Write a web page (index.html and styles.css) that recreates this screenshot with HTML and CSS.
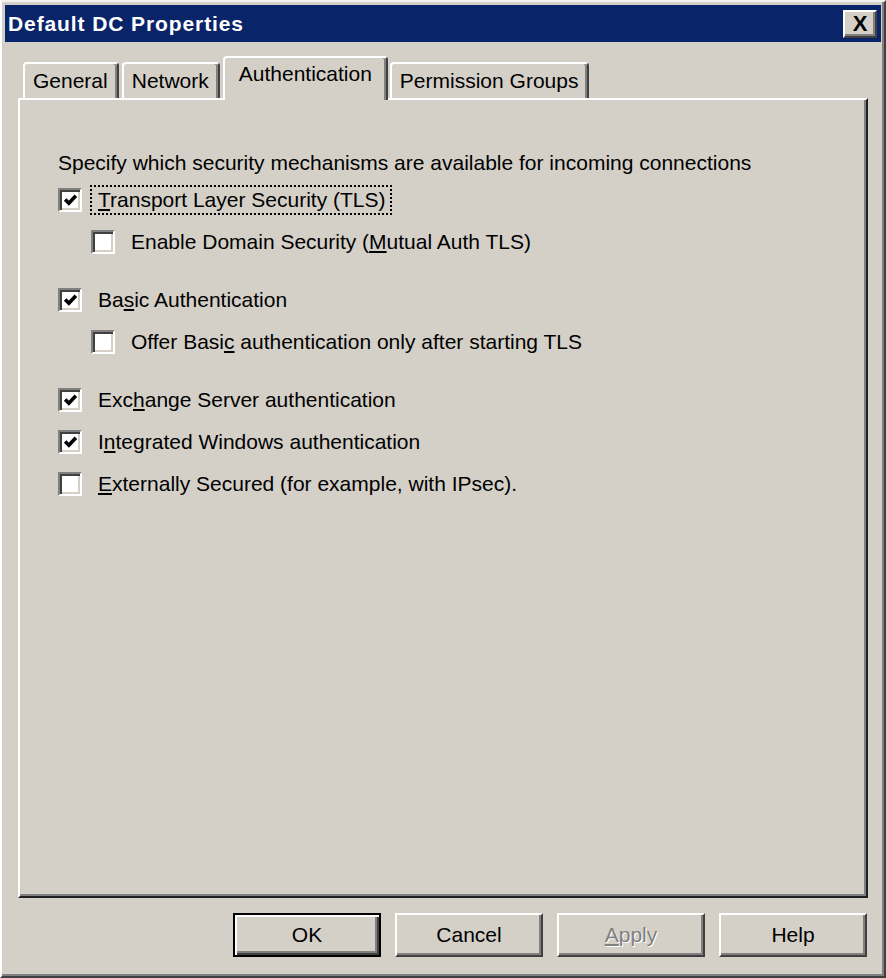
FILE: index.html
```html
<!DOCTYPE html>
<html lang="en">
<head>
  <meta charset="UTF-8">
  <title>Default DC Properties</title>
  <link rel="stylesheet" href="styles.css">
</head>
<body>
  <div class="window">
    <div class="titlebar">
      <span class="title">Default DC Properties</span>
      <span class="close">X</span>
    </div>

    <div class="content">
      <div class="tabs">
        <div class="tab">General</div>
        <div class="tab">Network</div>
        <div class="tab active">Authentication</div>
        <div class="tab">Permission Groups</div>
      </div>

      <div class="panel">
        <p class="intro">Specify which security mechanisms are available for incoming connections</p>

        <div class="group">
          <div class="row">
            <span class="box checked"><svg viewBox="0 0 14 14"><polyline points="2,6.5 5.5,10 12,3"/></svg></span>
            <span class="label focus"><u>T</u>ransport Layer Security (TLS)</span>
          </div>
          <div class="row sub">
            <span class="box"></span>
            <span class="label">Enable Domain Security (<u>M</u>utual Auth TLS)</span>
          </div>
        </div>

        <div class="group">
          <div class="row">
            <span class="box checked"><svg viewBox="0 0 14 14"><polyline points="2,6.5 5.5,10 12,3"/></svg></span>
            <span class="label">Ba<u>s</u>ic Authentication</span>
          </div>
          <div class="row sub">
            <span class="box"></span>
            <span class="label">Offer Basi<u>c</u> authentication only after starting TLS</span>
          </div>
        </div>

        <div class="group">
          <div class="row">
            <span class="box checked"><svg viewBox="0 0 14 14"><polyline points="2,6.5 5.5,10 12,3"/></svg></span>
            <span class="label">Exc<u>h</u>ange Server authentication</span>
          </div>
          <div class="row">
            <span class="box checked"><svg viewBox="0 0 14 14"><polyline points="2,6.5 5.5,10 12,3"/></svg></span>
            <span class="label">I<u>n</u>tegrated Windows authentication</span>
          </div>
          <div class="row">
            <span class="box"></span>
            <span class="label"><u>E</u>xternally Secured (for example, with IPsec).</span>
          </div>
        </div>
      </div>

      <div class="buttons">
        <div class="btn default">OK</div>
        <div class="btn">Cancel</div>
        <div class="btn disabled"><u>A</u>pply</div>
        <div class="btn">Help</div>
      </div>
    </div>
  </div>
</body>
</html>
```

FILE: styles.css
```css
body {
  margin: 0;
  background: #d4d0c8;
  font-family: "Liberation Sans", Arial, sans-serif;
  font-size: 21px;
  color: #000;
}

.window {
  width: 886px;
  height: 978px;
  box-sizing: border-box;
  padding: 3px;
  border-top: 2px solid #f4f2ee;
  border-left: 2px solid #fff;
  border-right: 2px solid #404040;
  border-bottom: 2px solid #404040;
  box-shadow: inset -2px -2px #808080;
}

/* Barra de título */
.titlebar {
  height: 37px;
  background: #0a246a;
  display: flex;
  align-items: center;
  justify-content: space-between;
  padding: 0 4px 0 3px;
}

.title {
  color: #fff;
  font-weight: bold;
  font-size: 21px;
  letter-spacing: 0.9px;
}

.close {
  width: 34px;
  height: 28px;
  box-sizing: border-box;
  background: #d4d0c8;
  border: 2px solid;
  border-color: #fff #404040 #404040 #fff;
  box-shadow: inset -2px -2px #808080;
  display: flex;
  align-items: center;
  justify-content: center;
  font-size: 22px;
  font-weight: bold;
  line-height: 1;
}

.content {
  padding: 14px 13px 0 13px;
}

/* Pestañas */
.tabs {
  display: flex;
  align-items: flex-end;
  height: 42px;
  padding-left: 5px;
  position: relative;
  z-index: 1;
}

.tab {
  height: 36px;
  box-sizing: border-box;
  padding: 5px 9px 0 8px;
  margin-right: 3px;
  border-top: 2px solid #fff;
  border-left: 2px solid #fff;
  border-right: 2px solid #404040;
  border-radius: 4px 4px 0 0;
  box-shadow: inset -2px 0 #808080;
  white-space: nowrap;
}

.tab.active {
  height: 44px;
  margin: 0 2px -2px 0;
  padding: 4px 14px 0 14px;
  background: #d4d0c8;
}

/* Panel principal */
.panel {
  height: 800px;
  box-sizing: border-box;
  border-top: 2px solid #fff;
  border-left: 2px solid #fff;
  border-right: 2px solid #202020;
  border-bottom: 2px solid #202020;
  box-shadow: inset -2px -2px #808080;
  padding: 48px 0 0 38px;
}

.intro {
  margin: 0;
  height: 31px;
  line-height: 30px;
}

.group + .group {
  margin-top: 16px;
}

.row {
  display: flex;
  align-items: center;
  height: 42px;
}

.row.sub {
  padding-left: 33px;
}

.box {
  width: 24px;
  height: 24px;
  box-sizing: border-box;
  flex-shrink: 0;
  background: #fff;
  border: 2px solid;
  border-color: #808080 #fff #fff #808080;
  box-shadow: inset 2px 2px #404040, inset -2px -2px #d4d0c8;
  margin-right: 16px;
  padding: 2px 2px 2px 3px;
}

.box svg {
  display: block;
  width: 100%;
  height: 100%;
}

.box polyline {
  fill: none;
  stroke: #000;
  stroke-width: 3.4;
}

.label.focus {
  outline: 2px dotted #000;
  outline-offset: 1px;
  margin-left: -5px;
  padding: 0 3px 0 5px;
}

/* Botones */
.buttons {
  display: flex;
  justify-content: flex-end;
  gap: 14px;
  margin-top: 15px;
  padding-right: 1px;
}

.btn {
  width: 148px;
  height: 44px;
  box-sizing: border-box;
  border: 2px solid;
  border-color: #fff #404040 #404040 #fff;
  box-shadow: inset -2px -2px #808080;
  display: flex;
  align-items: center;
  justify-content: center;
}

.btn.default {
  border: 2px solid #000;
  box-shadow: inset 2px 2px #fff, inset -2px -2px #404040, inset -4px -4px #808080;
}

.btn.disabled {
  color: #808080;
  text-shadow: 1px 1px #fff;
}
```
